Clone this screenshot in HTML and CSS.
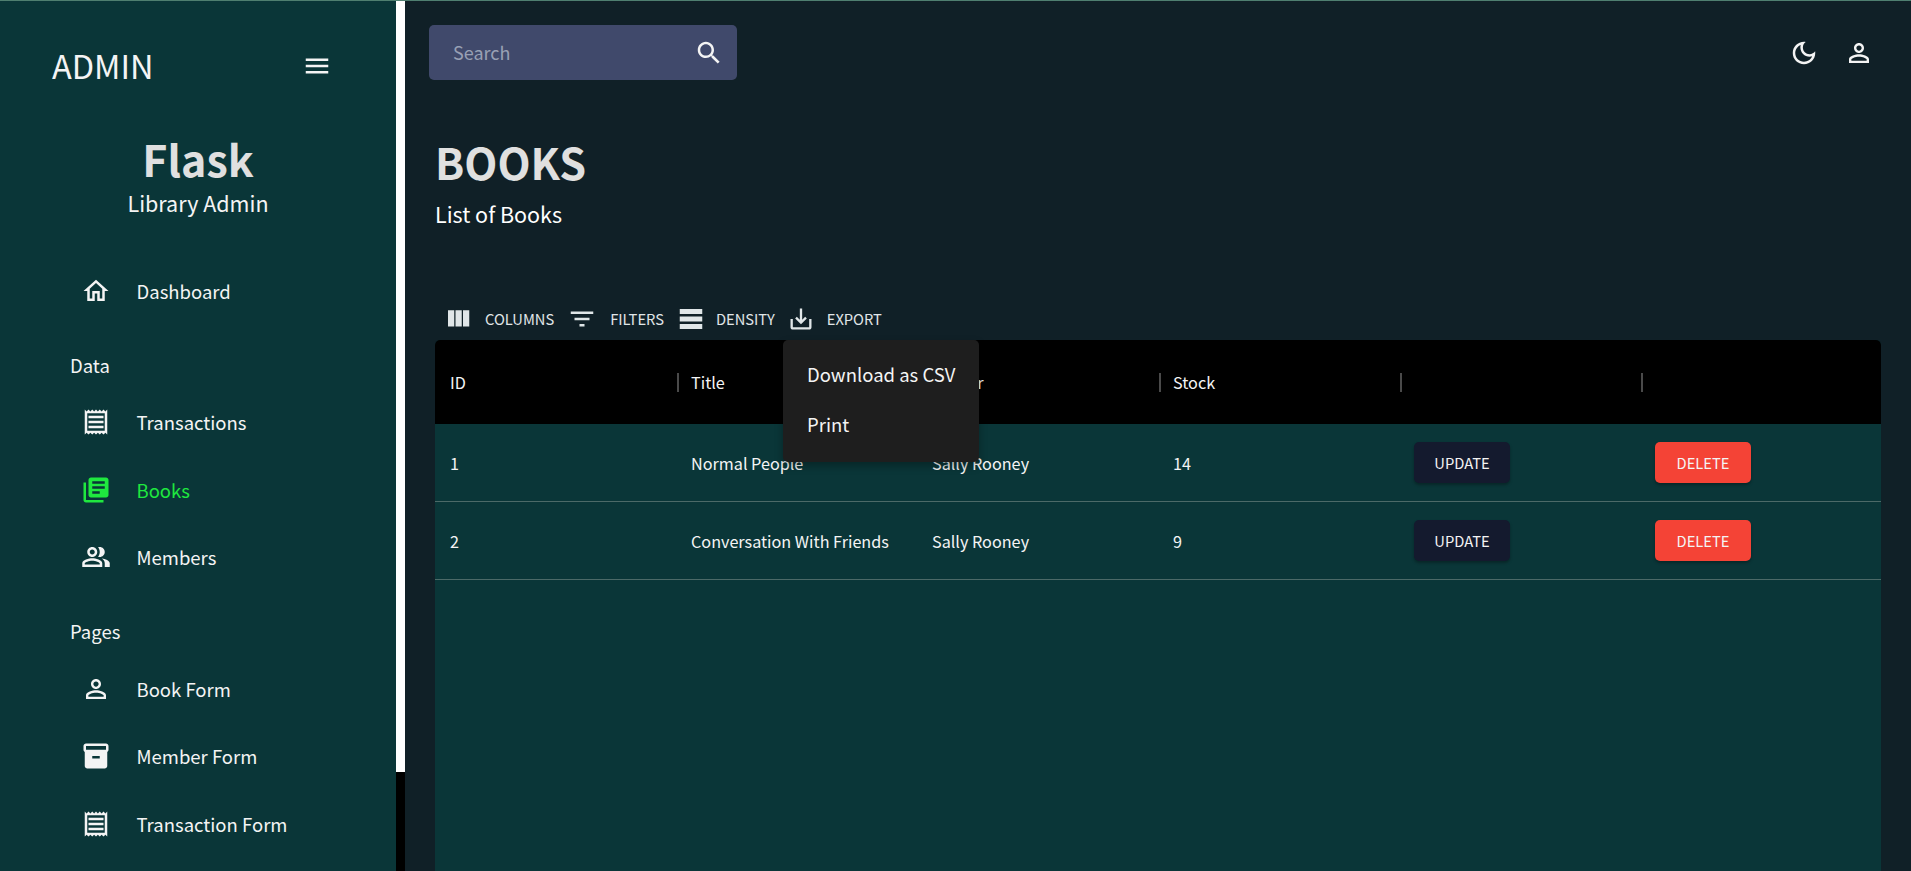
FILE: index.html
```html
<!DOCTYPE html>
<html lang="en">
<head>
    <meta charset="UTF-8" />
    <meta name="viewport" content="width=device-width, initial-scale=1.0" />
    <title>Library Admin - Books</title>
    <link rel="stylesheet" href="styles.css">
</head>
<body>
    <div class="app">
        <aside class="sidebar">
            <div class="brand-row">
                <span class="brand">ADMIN</span>
                <svg class="icon" viewBox="0 0 24 24"><path d="M3 18h18v-2H3v2zm0-5h18v-2H3v2zm0-7v2h18V6H3z"/></svg>
            </div>
            <div class="profile">
                <div class="profile-name">Flask</div>
                <div class="profile-role">Library Admin</div>
            </div>
            <nav class="nav">
                <a class="nav-item">
                    <svg class="icon" viewBox="0 0 24 24"><path d="M12 5.69l5 4.5V18h-2v-6H9v6H7v-7.81l5-4.5M12 3L2 12h3v8h6v-6h2v6h6v-8h3L12 3z"/></svg>
                    <span>Dashboard</span>
                </a>
                <div class="nav-label">Data</div>
                <a class="nav-item">
                    <svg class="icon" viewBox="0 0 24 24"><path d="M19.5 3.5 18 2l-1.5 1.5L15 2l-1.5 1.5L12 2l-1.5 1.5L9 2 7.5 3.5 6 2 4.5 3.5 3 2v20l1.5-1.5L6 22l1.5-1.5L9 22l1.5-1.5L12 22l1.5-1.5L15 22l1.5-1.5L18 22l1.5-1.5L21 22V2l-1.5 1.5zM19 19.09H5V4.91h14v14.18zM6 15h12v2H6zm0-4h12v2H6zm0-4h12v2H6z"/></svg>
                    <span>Transactions</span>
                </a>
                <a class="nav-item active">
                    <svg class="icon" viewBox="0 0 24 24"><path d="M4 6H2v14c0 1.1.9 2 2 2h14v-2H4V6zm16-4H8c-1.1 0-2 .9-2 2v12c0 1.1.9 2 2 2h12c1.1 0 2-.9 2-2V4c0-1.1-.9-2-2-2zm-1 9H9V9h10v2zm-4 4H9v-2h6v2zm4-8H9V5h10v2z"/></svg>
                    <span>Books</span>
                </a>
                <a class="nav-item">
                    <svg class="icon" viewBox="0 0 24 24"><path d="M16.67 13.13C18.04 14.06 19 15.32 19 17v3h4v-3c0-2.18-3.57-3.47-6.33-3.87zM15 12c2.21 0 4-1.79 4-4s-1.79-4-4-4c-.47 0-.91.1-1.33.24C14.5 5.27 15 6.58 15 8s-.5 2.73-1.33 3.76c.42.14.86.24 1.33.24zM9 12c2.21 0 4-1.79 4-4s-1.79-4-4-4-4 1.79-4 4 1.79 4 4 4zm0-6c1.1 0 2 .9 2 2s-.9 2-2 2-2-.9-2-2 .9-2 2-2zM9 13c-2.67 0-8 1.34-8 4v3h16v-3c0-2.66-5.33-4-8-4zm6 5H3v-.99C3.2 16.29 6.3 15 9 15s5.8 1.29 6 2v1z"/></svg>
                    <span>Members</span>
                </a>
                <div class="nav-label">Pages</div>
                <a class="nav-item">
                    <svg class="icon" viewBox="0 0 24 24"><path d="M12 5.9c1.16 0 2.1.94 2.1 2.1s-.94 2.1-2.1 2.1S9.9 9.16 9.9 8s.94-2.1 2.1-2.1m0 9c2.97 0 6.1 1.46 6.1 2.1v1.1H5.9V17c0-.64 3.13-2.1 6.1-2.1M12 4C9.79 4 8 5.79 8 8s1.79 4 4 4 4-1.79 4-4-1.79-4-4-4zm0 9c-2.67 0-8 1.34-8 4v3h16v-3c0-2.66-5.33-4-8-4z"/></svg>
                    <span>Book Form</span>
                </a>
                <a class="nav-item">
                    <svg class="icon" viewBox="0 0 24 24"><path d="M20 2H4c-1 0-2 .9-2 2v3.01c0 .72.43 1.34 1 1.69V20c0 1.1 1.1 2 2 2h14c.9 0 2-.9 2-2V8.7c.57-.35 1-.97 1-1.69V4c0-1.1-1-2-2-2zm-5 12H9v-2h6v2zm5-7H4V4l16-.02V7z"/></svg>
                    <span>Member Form</span>
                </a>
                <a class="nav-item">
                    <svg class="icon" viewBox="0 0 24 24"><path d="M19.5 3.5 18 2l-1.5 1.5L15 2l-1.5 1.5L12 2l-1.5 1.5L9 2 7.5 3.5 6 2 4.5 3.5 3 2v20l1.5-1.5L6 22l1.5-1.5L9 22l1.5-1.5L12 22l1.5-1.5L15 22l1.5-1.5L18 22l1.5-1.5L21 22V2l-1.5 1.5zM19 19.09H5V4.91h14v14.18zM6 15h12v2H6zm0-4h12v2H6zm0-4h12v2H6z"/></svg>
                    <span>Transaction Form</span>
                </a>
            </nav>
        </aside>

        <div class="scrollbar"><div class="scrollbar-thumb"></div></div>

        <main class="main">
            <header class="topbar">
                <div class="search">
                    <span class="search-text">Search</span>
                    <svg class="icon" viewBox="0 0 24 24"><path d="M15.5 14h-.79l-.28-.27C15.41 12.59 16 11.11 16 9.5 16 5.91 13.09 3 9.5 3S3 5.91 3 9.5 5.91 16 9.5 16c1.61 0 3.09-.59 4.23-1.57l.27.28v.79l5 4.99L20.49 19l-4.99-5zm-6 0C7.01 14 5 11.99 5 9.5S7.01 5 9.5 5 14 7.01 14 9.5 11.99 14 9.5 14z"/></svg>
                </div>
                <div class="topbar-icons">
                    <svg class="icon" viewBox="0 0 24 24"><path d="M9.37 5.51c-.18.64-.27 1.31-.27 1.99 0 4.08 3.32 7.4 7.4 7.4.68 0 1.35-.09 1.99-.27C17.45 17.19 14.93 19 12 19c-3.86 0-7-3.14-7-7 0-2.93 1.81-5.45 4.37-6.49zM12 3c-4.97 0-9 4.03-9 9s4.03 9 9 9 9-4.03 9-9c0-.46-.04-.92-.1-1.36-.98 1.37-2.58 2.26-4.4 2.26-2.98 0-5.4-2.42-5.4-5.4 0-1.81.89-3.42 2.26-4.4-.44-.06-.9-.1-1.36-.1z"/></svg>
                    <svg class="icon" viewBox="0 0 24 24"><path d="M12 5.9c1.16 0 2.1.94 2.1 2.1s-.94 2.1-2.1 2.1S9.9 9.16 9.9 8s.94-2.1 2.1-2.1m0 9c2.97 0 6.1 1.46 6.1 2.1v1.1H5.9V17c0-.64 3.13-2.1 6.1-2.1M12 4C9.79 4 8 5.79 8 8s1.79 4 4 4 4-1.79 4-4-1.79-4-4-4zm0 9c-2.67 0-8 1.34-8 4v3h16v-3c0-2.66-5.33-4-8-4z"/></svg>
                </div>
            </header>

            <section class="content">
                <h1 class="page-title">BOOKS</h1>
                <p class="page-subtitle">List of Books</p>

                <div class="toolbar">
                    <span class="tool">
                        <svg class="icon" viewBox="0 0 24 24"><path d="M10 18h5V5h-5v13zm-6 0h5V5H4v13zM16 5v13h5V5h-5z"/></svg>
                        <span>COLUMNS</span>
                    </span>
                    <span class="tool tool-filter">
                        <svg class="icon" viewBox="0 0 24 24"><path d="M10 18h4v-2h-4v2zM3 6v2h18V6H3zm3 7h12v-2H6v2z"/></svg>
                        <span>FILTERS</span>
                    </span>
                    <span class="tool tool-density">
                        <svg class="icon" viewBox="0 0 24 24"><path d="M21 8H3V4h18v4zm0 2H3v4h18v-4zm0 6H3v4h18v-4z"/></svg>
                        <span>DENSITY</span>
                    </span>
                    <span class="tool tool-export">
                        <svg class="icon" viewBox="0 0 24 24"><path d="M19 12v7H5v-7H3v7c0 1.1.9 2 2 2h14c1.1 0 2-.9 2-2v-7h-2zm-6 .67l2.59-2.58L17 11.5l-5 5-5-5 1.41-1.41L11 12.67V3h2z"/></svg>
                        <span>EXPORT</span>
                    </span>
                </div>

                <div class="grid">
                    <div class="grid-row grid-head">
                        <div class="cell">ID</div>
                        <div class="cell"><i class="sep"></i>Title</div>
                        <div class="cell"><i class="sep"></i>Author</div>
                        <div class="cell"><i class="sep"></i>Stock</div>
                        <div class="cell"><i class="sep"></i></div>
                        <div class="cell"><i class="sep"></i></div>
                    </div>
                    <div class="grid-row">
                        <div class="cell">1</div>
                        <div class="cell">Normal People</div>
                        <div class="cell">Sally Rooney</div>
                        <div class="cell">14</div>
                        <div class="cell"><button class="btn btn-update">UPDATE</button></div>
                        <div class="cell"><button class="btn btn-delete">DELETE</button></div>
                    </div>
                    <div class="grid-row">
                        <div class="cell">2</div>
                        <div class="cell">Conversation With Friends</div>
                        <div class="cell">Sally Rooney</div>
                        <div class="cell">9</div>
                        <div class="cell"><button class="btn btn-update">UPDATE</button></div>
                        <div class="cell"><button class="btn btn-delete">DELETE</button></div>
                    </div>

                    <div class="export-menu">
                        <div class="export-item">Download as CSV</div>
                        <div class="export-item">Print</div>
                    </div>
                </div>
            </section>
        </main>
    </div>
</body>
</html>
```

FILE: styles.css
```css
* {
    box-sizing: border-box;
}
html, body {
    height: 100%;
    margin: 0;
    overflow: hidden;
}
body {
    font-family: "Noto Sans CJK SC", "Noto Sans", sans-serif;
    background-color: #102027;
    color: #f4f4f4;
}
.icon {
    width: 30px;
    height: 30px;
    flex-shrink: 0;
    fill: currentColor;
}
.app {
    display: flex;
    height: 100%;
    border-top: 1px solid #4f7f70;
}

/* sidebar */
.sidebar {
    width: 396px;
    flex-shrink: 0;
    background-color: #0a3638;
}
.brand-row {
    display: flex;
    align-items: center;
    justify-content: space-between;
    height: 50px;
    margin: 40px 64px 0 52px;
}
.brand {
    font-size: 32.5px;
    line-height: 48px;
    margin-top: -3px;
}
.profile {
    margin-top: 39px;
    text-align: center;
}
.profile-name {
    font-size: 43px;
    font-weight: 700;
    line-height: 56px;
    color: #e0e0e0;
}
.profile-role {
    font-size: 21.5px;
    line-height: 34px;
}
.nav {
    margin-top: 37px;
}
.nav-item {
    display: flex;
    align-items: center;
    gap: 26px;
    height: 67.5px;
    padding-left: 80.5px;
    font-size: 18.5px;
}
.nav-item.active {
    color: #1fe83f;
}
.nav-label {
    height: 64px;
    padding: 28px 0 0 70px;
    font-size: 18.5px;
    line-height: 24px;
}

/* fake page scrollbar between sidebar and main */
.scrollbar {
    width: 9px;
    flex-shrink: 0;
    background-color: #000;
}
.scrollbar-thumb {
    height: 771px;
    background-color: #fff;
}

/* main */
.main {
    flex: 1;
    min-width: 0;
    display: flex;
    flex-direction: column;
}
.topbar {
    display: flex;
    align-items: center;
    justify-content: space-between;
    padding: 24px 37px 0 24px;
}
.search {
    display: flex;
    align-items: center;
    justify-content: space-between;
    width: 308px;
    height: 55px;
    padding: 0 13px 0 24px;
    background-color: #40496b;
    border-radius: 5px;
}
.search-text {
    font-size: 18px;
    line-height: 24px;
    margin-top: -2px;
    color: #98a0b4;
}
.topbar-icons {
    display: flex;
    gap: 25px;
}
.content {
    flex: 1;
    min-height: 0;
    display: flex;
    flex-direction: column;
    padding: 0 30px;
}
.page-title {
    margin: 51px 0 0 0;
    font-size: 43px;
    font-weight: 700;
    line-height: 60px;
    color: #e0e0e0;
}
.page-subtitle {
    margin: 5px 0 0 0;
    font-size: 21.5px;
    line-height: 36px;
    color: #fff;
}
.toolbar {
    display: flex;
    align-items: center;
    gap: 12px;
    height: 40px;
    margin-top: 67px;
    padding-left: 8px;
    font-size: 14.7px;
    color: #e0e6e8;
}
.tool {
    display: flex;
    align-items: center;
    gap: 12px;
}
.tool span {
    margin-top: -2px;
}
.tool-filter {
    margin-left: 1px;
    gap: 13px;
}
.tool-density {
    gap: 10px;
}
.tool-export .icon {
    width: 28px;
    height: 28px;
}
.grid {
    position: relative;
    flex: 1;
    margin-top: 1px;
    background-color: #0a3638;
    border-radius: 5px 5px 0 0;
    font-size: 16.2px;
}
.grid-row {
    display: grid;
    grid-template-columns: repeat(6, 1fr);
    height: 78px;
    border-bottom: 1px solid #4c6a68;
}
.grid-head {
    height: 84px;
    background-color: #000;
    border-bottom: none;
    border-radius: 5px 5px 0 0;
}
.cell {
    display: flex;
    align-items: center;
    padding-left: 15px;
}
.grid-head .cell:not(:first-child) {
    padding-left: 1px;
}
.sep {
    width: 2px;
    height: 19px;
    margin-right: 12px;
    background-color: #4a4a4a;
}
.btn {
    width: 96px;
    height: 41px;
    border: none;
    border-radius: 5px;
    font-family: inherit;
    font-size: 14.7px;
    color: #f4f4f4;
    box-shadow: 0 2px 3px rgba(0,0,0,0.3);
}
.btn-update {
    background-color: #141a2e;
}
.btn-delete {
    background-color: #f44336;
}
.export-menu {
    position: absolute;
    top: 0;
    left: 348px;
    width: 196px;
    height: 122px;
    padding-top: 10px;
    background-color: #1e1e1e;
    border-radius: 5px;
    box-shadow: 0 4px 8px rgba(0,0,0,0.3);
    font-size: 18.5px;
}
.export-item {
    height: 49.5px;
    padding-left: 24px;
    line-height: 49px;
}
```
